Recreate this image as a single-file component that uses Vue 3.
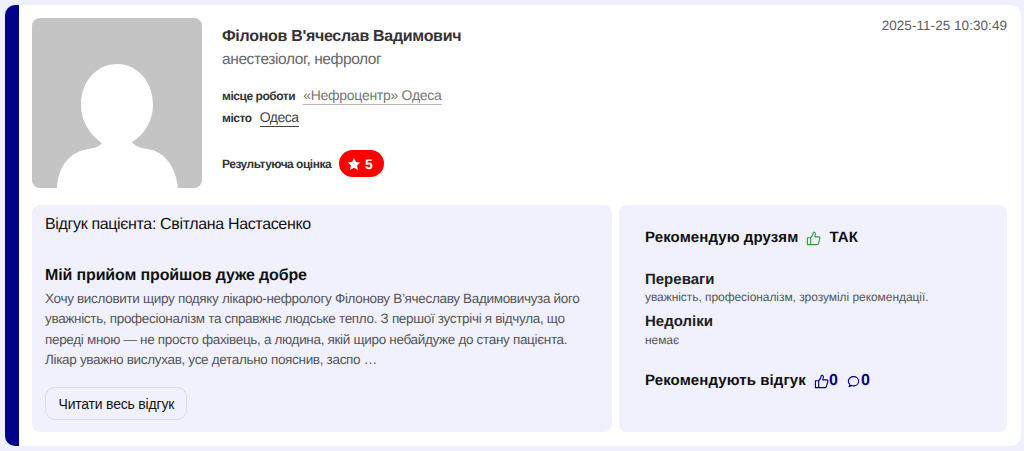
<template>
  <div class="page">
    <div class="card">
      <span class="date">2025-11-25 10:30:49</span>
      <div class="top">
        <div class="avatar">
          <svg viewBox="0 0 170 170" width="170" height="170">
            <path d="M25 170C26 150 36 136 52 132C60 130 66 130 70 125C58 117 49 103 49 87C49 63 65 46 85 46C105 46 121 63 121 87C121 103 112 117 100 124C104 130 112 130 120 132C134 136 144 150 146 170Z" fill="#fff" />
          </svg>
        </div>
        <div class="info">
          <h1 class="name">Філонов В'ячеслав Вадимович</h1>
          <div class="spec">анестезіолог, нефролог</div>
          <div class="row work">
            <b>місце роботи</b>
            <a class="grey">«Нефроцентр» Одеса</a>
          </div>
          <div class="row city">
            <b>місто</b>
            <a>Одеса</a>
          </div>
          <div class="score">
            <b>Результуюча оцінка</b>
            <span class="badge">
              <svg viewBox="0 0 24 24" width="14" height="14"><path d="M12 1.500l3.300 6.900 7.500 1-5.500 5.200 1.400 7.500-6.700-3.600-6.700 3.600 1.400-7.500-5.500-5.200 7.500-1z" fill="#fff" /></svg>
              5
            </span>
          </div>
        </div>
      </div>
      <div class="bottom">
        <div class="box review">
          <div class="author">Відгук пацієнта: Світлана Настасенко</div>
          <h2 class="title">Мій прийом пройшов дуже добре</h2>
          <p class="text">Хочу висловити щиру подяку лікарю-нефрологу Філонову В’ячеславу Вадимовичуза його уважність, професіоналізм та справжнє людське тепло. З першої зустрічі я відчула, що переді мною — не просто фахівець, а людина, якій щиро небайдуже до стану пацієнта. Лікар уважно вислухав, усе детально пояснив, заспо …</p>
          <button class="more">Читати весь відгук</button>
        </div>
        <div class="box side">
          <div class="line rec">
            <span>Рекомендую друзям</span>
            <svg class="thumb" viewBox="0 0 16 16" width="15" height="15" fill="none" stroke="#2e9e3a" stroke-width="1.200" stroke-linejoin="round"><path d="M5 7.200V14.500H1.500V7.200ZM5 7.200C6.500 5.800 7.500 4 7.800 1.800C7.900 1 9.800 1 10 2.800C10.100 4 9.700 5.200 9.300 6.200H13.500C14.700 6.200 15 7.200 14.700 8L13.300 13.300C13.100 14.100 12.500 14.500 11.800 14.500H5" /></svg>
            <span class="yes">ТАК</span>
          </div>
          <h3 class="sub pros">Переваги</h3>
          <div class="small first">уважність, професіоналізм, зрозумілі рекомендації.</div>
          <h3 class="sub">Недоліки</h3>
          <div class="small">немає</div>
          <div class="line votes">
            <span>Рекомендують відгук</span>
            <svg class="thumb" viewBox="0 0 16 16" width="15" height="15" fill="none" stroke="#00008b" stroke-width="1.200" stroke-linejoin="round"><path d="M5 7.200V14.500H1.500V7.200ZM5 7.200C6.500 5.800 7.500 4 7.800 1.800C7.900 1 9.800 1 10 2.800C10.100 4 9.700 5.200 9.300 6.200H13.500C14.700 6.200 15 7.200 14.700 8L13.300 13.300C13.100 14.100 12.500 14.500 11.800 14.500H5" /></svg>
            <span class="count">0</span>
            <svg class="bubble" viewBox="0 0 16 16" width="13" height="13" fill="none" stroke="#00008b" stroke-width="1.400" stroke-linejoin="round"><path d="M2.500 14C3.500 13.300 3.800 12.500 3.600 11.500C2.400 10.500 1.700 9.200 1.700 7.700C1.700 4.500 4.500 2 8 2C11.500 2 14.300 4.500 14.300 7.700C14.300 10.900 11.500 13.400 8 13.400C7 13.400 6.200 13.200 5.400 12.900C4.700 13.600 3.700 14 2.500 14Z" /></svg>
            <span class="count">0</span>
          </div>
        </div>
      </div>
    </div>
  </div>
</template>

<script setup>
</script>

<style>
html, body {
  margin: 0;
  background: #eef0fe;
}
</style>

<style scoped>
.page {
  box-sizing: border-box;
  width: 1024px;
  height: 451px;
  padding: 5px 3px 5px 5px;
  font-family: "Liberation Sans", Arial, sans-serif;
  text-rendering: geometricPrecision;
  background: #eef0fe;
  overflow: hidden;
}

.card {
  position: relative;
  box-sizing: border-box;
  height: 441px;
  padding: 13px 14px 14px 13px;
  background: #fff;
  border-left: 14px solid #00008b;
  border-radius: 10px;
}

.date {
  position: absolute;
  top: 13px;
  right: 14px;
  font-size: 13.500px;
  line-height: 16px;
  letter-spacing: 0.050px;
  color: #5c5c5c;
}

.top {
  display: flex;
  gap: 20px;
  height: 170px;
}

.avatar {
  width: 170px;
  height: 170px;
  border-radius: 8px;
  background: #c4c4c4;
  overflow: hidden;
  flex: none;
}

.avatar svg {
  display: block;
}

.info {
  padding-top: 9px;
}

.name {
  margin: 0;
  font-size: 16px;
  line-height: 19px;
  font-weight: 700;
  letter-spacing: -0.300px;
  color: #333;
}

.spec {
  margin-top: 5px;
  font-size: 15.500px;
  line-height: 18px;
  letter-spacing: -0.400px;
  color: #666;
}

.row {
  display: flex;
  align-items: baseline;
  gap: 8px;
  font-size: 14px;
  line-height: 17px;
}

.row b {
  font-size: 12px;
  letter-spacing: -0.450px;
  color: #333;
}

.work {
  margin-top: 18px;
}

.city {
  margin-top: 4px;
}

.row a {
  letter-spacing: -0.280px;
  color: #444;
  border-bottom: 1px solid #444;
}

.city a {
  letter-spacing: -0.500px;
}

.row a.grey {
  color: #777;
  border-bottom-color: #bbb;
}

.score {
  display: flex;
  align-items: center;
  gap: 8px;
  margin-top: 23px;
}

.score b {
  font-size: 12px;
  letter-spacing: -0.500px;
  color: #333;
}

.badge {
  display: flex;
  align-items: center;
  gap: 4px;
  height: 27px;
  padding: 0 11px 0 8px;
  box-sizing: border-box;
  border-radius: 14px;
  background: #f00;
  color: #fff;
  font-size: 14px;
  font-weight: 700;
}

.bottom {
  display: flex;
  gap: 7px;
  margin-top: 17px;
  height: 227px;
}

.box {
  box-sizing: border-box;
  border-radius: 8px;
  background: #f0f1fc;
}

.review {
  width: 580px;
  padding: 11px 13px;
}

.author {
  font-size: 16px;
  line-height: 18px;
  letter-spacing: -0.350px;
  color: #111;
}

.title {
  margin: 32px 0 0;
  font-size: 16px;
  line-height: 19px;
  font-weight: 700;
  letter-spacing: -0.140px;
  color: #111;
}

.text {
  margin: 4px 0 0;
  font-size: 13.500px;
  line-height: 20.300px;
  letter-spacing: -0.320px;
  color: #555;
}

.more {
  display: block;
  margin-top: 17px;
  margin-left: -0.500px;
  height: 33px;
  padding: 0 12px 0 13px;
  border: 1px solid #dcdce2;
  border-radius: 10px;
  background: #f0f1fc;
  font-family: inherit;
  font-size: 14px;
  letter-spacing: -0.200px;
  color: #111;
}

.side {
  width: 388px;
  padding: 24px 26px;
}

.line {
  display: flex;
  align-items: center;
  font-size: 15px;
  line-height: 18px;
  font-weight: 700;
  letter-spacing: 0.100px;
  color: #111;
}

.thumb {
  margin-left: 8px;
}

.yes {
  margin-left: 8px;
}

.sub {
  margin: 0;
  font-size: 15px;
  line-height: 18px;
  font-weight: 700;
  color: #222;
}

.pros {
  margin-top: 24px;
}

.small {
  margin: 2px 0 9px;
  font-size: 12px;
  line-height: 14px;
  letter-spacing: -0.060px;
  color: #555;
}

.small.first {
  margin-top: 1px;
}

.votes {
  margin-top: 25px;
}

.count {
  color: #00008b;
  font-size: 16px;
}

.bubble {
  margin-left: 9px;
  margin-right: 1px;
}
</style>
